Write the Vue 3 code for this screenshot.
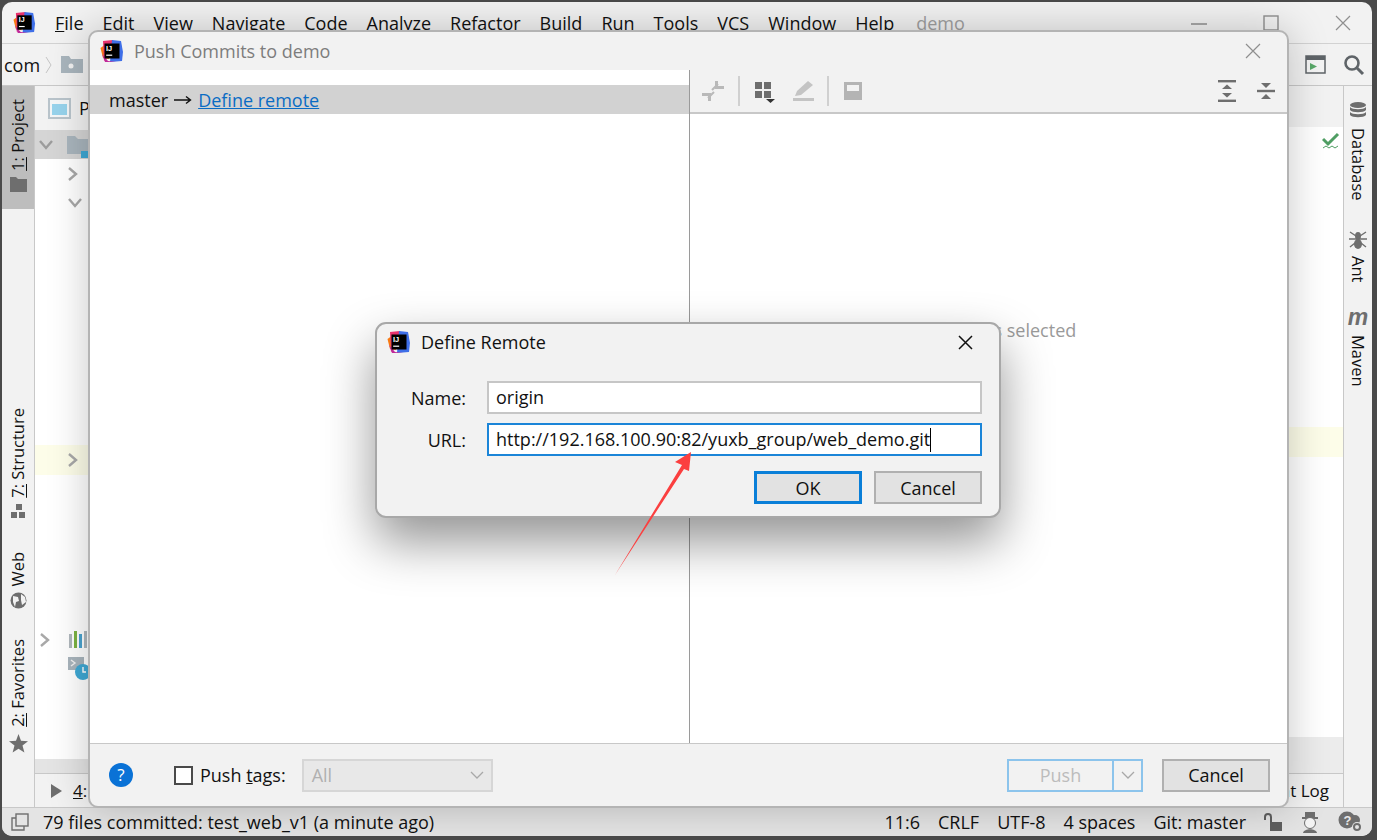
<script setup>
const menus = [
  { pre: '', key: 'F', post: 'ile' },
  { pre: '', key: 'E', post: 'dit' },
  { pre: '', key: 'V', post: 'iew' },
  { pre: '', key: 'N', post: 'avigate' },
  { pre: '', key: 'C', post: 'ode' },
  { pre: 'Anal', key: 'y', post: 'ze' },
  { pre: '', key: 'R', post: 'efactor' },
  { pre: '', key: 'B', post: 'uild' },
  { pre: 'R', key: 'u', post: 'n' },
  { pre: '', key: 'T', post: 'ools' },
  { pre: 'VC', key: 'S', post: '' },
  { pre: '', key: 'W', post: 'indow' },
  { pre: '', key: 'H', post: 'elp' },
]
</script>

<template>
  <div class="desktop">
    <svg class="defs" width="0" height="0">
      <symbol id="ij" viewBox="0 0 24 24">
        <polygon points="0.5,9 6,5 9,20 3,19" fill="#f97a12" />
        <polygon points="3,2 13,1 14,12 4,22" fill="#e8336e" />
        <polygon points="12,1 21,2 23,13 22,22 10,23" fill="#3f6fe8" />
        <polygon points="2,15 8,22 16,23 5,23" fill="#c02a9a" />
        <rect x="4.5" y="4.5" width="15" height="15" fill="#000" />
        <text x="6" y="11.6" font-size="7.4" font-weight="700" fill="#fff" font-family="Liberation Sans, sans-serif">IJ</text>
        <rect x="6.2" y="15.6" width="6" height="1.2" fill="#fff" />
      </symbol>
    </svg>

    <div class="ide">
      <div class="titlebar">
        <svg class="logo" width="23" height="23"><use href="#ij" /></svg>
        <div class="menu">
          <span v-for="m in menus" :key="m.pre + m.key">{{ m.pre }}<u>{{ m.key }}</u>{{ m.post }}</span>
        </div>
        <span class="proj-name">demo</span>
        <div class="win-controls">
          <svg width="16" height="16" viewBox="0 0 16 16"><path d="M0 9h16" stroke="#8f8f8f" stroke-width="1.4" /></svg>
          <svg width="16" height="16" viewBox="0 0 16 16"><rect x="1" y="1" width="14" height="14" fill="none" stroke="#8f8f8f" stroke-width="1.4" /></svg>
          <svg width="16" height="16" viewBox="0 0 16 16"><path d="M1 1l14 14M15 1L1 15" stroke="#8f8f8f" stroke-width="1.2" /></svg>
        </div>
      </div>

      <div class="navbar">
        <span class="crumb">com</span>
        <svg width="8" height="18" viewBox="0 0 8 18"><path d="M1 1l5 8-5 8" fill="none" stroke="#c4c4c4" /></svg>
        <svg class="nav-folder" width="22" height="17" viewBox="0 0 22 17">
          <path d="M0 0h8l2 3h12v14H0z" fill="#a9b5bd" />
          <circle cx="10" cy="10" r="2.5" fill="#f2f2f2" />
        </svg>
        <div class="nav-right">
          <svg width="21" height="19" viewBox="0 0 21 19">
            <rect x="1" y="1" width="19" height="17" fill="#f4f4f4" stroke="#5f6468" stroke-width="1.5" />
            <rect x="1" y="1" width="19" height="4" fill="#5f6468" />
            <polygon points="5,8 12,11.5 5,15" fill="#59a869" />
          </svg>
          <svg width="22" height="22" viewBox="0 0 22 22">
            <circle cx="9" cy="9" r="6.5" fill="none" stroke="#5f6468" stroke-width="2.6" />
            <path d="M14 14l6 6" stroke="#5f6468" stroke-width="3" />
          </svg>
        </div>
      </div>

      <div class="workspace">
        <div class="stripe stripe-left">
          <div class="stripe-btn active">
            <span class="vtext-up"><u>1:</u> Project</span>
            <svg width="17" height="15" viewBox="0 0 17 15"><path d="M0 0h6l2 2h9v13H0z" fill="#6e6e6e" /></svg>
          </div>
          <div class="stripe-btn btn-structure">
            <span class="vtext-up"><u>7:</u> Structure</span>
            <svg width="15" height="15" viewBox="0 0 15 15" fill="#6e6e6e">
              <rect x="5" y="0" width="6" height="6" />
              <rect x="0" y="8" width="6" height="6" />
              <rect x="8" y="8" width="6" height="6" />
            </svg>
          </div>
          <div class="stripe-btn btn-web">
            <span class="vtext-up">Web</span>
            <svg width="17" height="17" viewBox="0 0 17 17">
              <circle cx="8.5" cy="8.5" r="8" fill="#6e6e6e" />
              <path d="M3 4l5 1 1 4-3 1-1 5-2-5zM11 2l4 3 1 5-4 3-1-5z" fill="#f2f2f2" />
            </svg>
          </div>
          <div class="stripe-btn btn-fav">
            <span class="vtext-up"><u>2:</u> Favorites</span>
            <svg width="19" height="19" viewBox="0 0 19 19"><polygon points="9.5,0 12,6.8 19,7.2 13.5,11.6 15.4,18.6 9.5,14.7 3.6,18.6 5.5,11.6 0,7.2 7,6.8" fill="#6e6e6e" /></svg>
          </div>
        </div>

        <div class="center">
          <div class="panes">
            <div class="tree">
              <div class="tree-head">
                <svg width="23" height="21" viewBox="0 0 23 21">
                  <rect x="1" y="1" width="21" height="19" fill="#f4f6f7" stroke="#b9c4cb" stroke-width="2" />
                  <rect x="4" y="6" width="15" height="11" fill="#97d3ec" />
                </svg>
                <span>P</span>
              </div>
              <div class="tree-row selected">
                <svg class="chev" width="14" height="10" viewBox="0 0 14 10"><path d="M1 1l6 7 6-7" fill="none" stroke="#9c9c9c" stroke-width="2.4" /></svg>
                <svg class="tree-folder" width="24" height="22" viewBox="0 0 24 22">
                  <path d="M0 0h8l3 3h13v15H0z" fill="#a9b5bd" />
                  <rect x="14" y="15" width="10" height="7" fill="#3fa9d5" />
                </svg>
              </div>
              <div class="tree-row sub">
                <svg width="10" height="14" viewBox="0 0 10 14"><path d="M1 1l7 6-7 6" fill="none" stroke="#a8a8a8" stroke-width="2.4" /></svg>
              </div>
              <div class="tree-row sub">
                <svg width="14" height="10" viewBox="0 0 14 10"><path d="M1 1l6 7 6-7" fill="none" stroke="#a8a8a8" stroke-width="2.4" /></svg>
              </div>
              <div class="tree-row sub highlighted">
                <svg width="10" height="14" viewBox="0 0 10 14"><path d="M1 1l7 6-7 6" fill="none" stroke="#a8a8a8" stroke-width="2.4" /></svg>
              </div>
              <div class="tree-row libs">
                <svg width="10" height="14" viewBox="0 0 10 14"><path d="M1 1l7 6-7 6" fill="none" stroke="#a8a8a8" stroke-width="2.4" /></svg>
                <svg class="libs-icon" width="20" height="17" viewBox="0 0 20 17">
                  <rect x="0" y="3" width="3" height="14" fill="#b0b8bd" />
                  <rect x="5" y="0" width="3" height="17" fill="#7cb342" />
                  <rect x="10" y="3" width="3" height="14" fill="#4aa3cf" />
                  <rect x="15" y="0" width="3" height="17" fill="#b0b8bd" />
                </svg>
              </div>
              <div class="tree-row scratches">
                <svg width="20" height="24" viewBox="0 0 20 24">
                  <rect x="0" y="0" width="16" height="13" fill="#a9b5bd" />
                  <path d="M3 3l4 3-4 3" fill="none" stroke="#f2f2f2" stroke-width="1.4" />
                  <circle cx="15" cy="15" r="8" fill="#3fa9d5" />
                  <path d="M15 10v5h3" fill="none" stroke="#fff" stroke-width="1.4" />
                </svg>
              </div>
              <div class="tree-scroll"></div>
            </div>
            <div class="editor"></div>
            <div class="side-panel">
              <div class="side-head"></div>
              <div class="side-body">
                <svg class="inspect" width="18" height="18" viewBox="0 0 18 18">
                  <path d="M1 7l5 5 10-10" fill="none" stroke="#4f9e63" stroke-width="3" />
                  <path d="M1 16l3-2 3 2 3-2 3 2 3-2" fill="none" stroke="#4f9e63" stroke-width="1" />
                </svg>
                <div class="side-caret"></div>
              </div>
              <div class="side-scroll"></div>
            </div>
          </div>
          <div class="toolbar-bottom">
            <svg width="11" height="14" viewBox="0 0 11 14"><polygon points="0,0 11,7 0,14" fill="#6e6e6e" /></svg>
            <span class="tool-run"><u>4</u>:</span>
            <span class="tool-log">Event Log</span>
          </div>
        </div>

        <div class="stripe stripe-right">
          <div class="stripe-btn btn-db">
            <svg width="18" height="18" viewBox="0 0 18 18" fill="#6e6e6e">
              <ellipse cx="9" cy="3" rx="8" ry="3" />
              <path d="M1 5c2 3 14 3 16 0v3c-2 3-14 3-16 0zM1 10c2 3 14 3 16 0v3c-2 3-14 3-16 0z" />
            </svg>
            <span class="vtext-down">Database</span>
          </div>
          <div class="stripe-btn btn-ant">
            <svg width="18" height="20" viewBox="0 0 18 20">
              <ellipse cx="9" cy="6" rx="3" ry="4" fill="#6e6e6e" />
              <ellipse cx="9" cy="14" rx="4" ry="5" fill="#6e6e6e" />
              <path d="M1 2l6 4M17 2l-6 4M0 9h18M1 17l5-4M17 17l-5-4" stroke="#6e6e6e" stroke-width="1.4" />
            </svg>
            <span class="vtext-down">Ant</span>
          </div>
          <div class="stripe-btn btn-mvn">
            <span class="mvn-glyph">m</span>
            <span class="vtext-down">Maven</span>
          </div>
        </div>
      </div>

      <div class="statusbar">
        <svg width="18" height="18" viewBox="0 0 18 18" fill="none" stroke="#6e6e6e" stroke-width="1.4">
          <rect x="5" y="1" width="12" height="12" />
          <path d="M5 5H1v12h12v-4" />
        </svg>
        <span class="status-msg">79 files committed: test_web_v1 (a minute ago)</span>
        <div class="status-right">
          <span>11:6</span>
          <span>CRLF</span>
          <span>UTF-8</span>
          <span>4 spaces</span>
          <span>Git: master</span>
          <svg width="18" height="18" viewBox="0 0 18 18">
            <path d="M1 7V4a3 3 0 0 1 6 0v5" fill="none" stroke="#5f5f5f" stroke-width="2" />
            <rect x="6" y="9" width="12" height="9" fill="#5f5f5f" />
          </svg>
          <svg width="20" height="21" viewBox="0 0 20 21">
            <rect x="5" y="0" width="10" height="6" fill="#6e6e6e" />
            <rect x="2" y="5" width="16" height="2" fill="#6e6e6e" />
            <circle cx="10" cy="11" r="5.5" fill="#f4f4f4" stroke="#6e6e6e" />
            <path d="M3 21c1-5 13-5 14 0z" fill="#6e6e6e" />
          </svg>
          <svg width="25" height="22" viewBox="0 0 25 22">
            <circle cx="9" cy="9" r="8.5" fill="#6e6e6e" />
            <circle cx="17" cy="9" r="5" fill="#6e6e6e" />
            <text x="5.5" y="14" font-size="13" font-weight="700" fill="#e8e8e8" font-family="Liberation Sans, sans-serif">?</text>
            <circle cx="19" cy="16" r="5" fill="#e4e4e4" />
            <circle cx="19" cy="16" r="3" fill="none" stroke="#6e6e6e" stroke-width="2" />
          </svg>
        </div>
      </div>
    </div>

    <div class="push-dialog">
      <div class="dlg-title">
        <svg width="24" height="24"><use href="#ij" /></svg>
        <span>Push Commits to demo</span>
        <svg class="dlg-close" width="16" height="16" viewBox="0 0 16 16"><path d="M1 1l14 14M15 1L1 15" stroke="#8f8f8f" stroke-width="1.2" /></svg>
      </div>
      <div class="dlg-body">
        <div class="commits">
          <div class="branch-row">
            <span>master</span>
            <svg width="18" height="10" viewBox="0 0 18 10"><path d="M0 5h16M12 1.5L16.5 5 12 8.5" fill="none" stroke="#111" stroke-width="1.4" /></svg>
            <a class="link">Define remote</a>
          </div>
        </div>
        <div class="details">
          <div class="details-bar">
            <svg width="22" height="20" viewBox="0 0 22 20" fill="#b9b9b9">
              <polygon points="13,0 13,8 22,8 22,5 16,5 16,0" transform="rotate(0 0 0)" />
              <polygon points="9,20 9,12 0,12 0,15 6,15 6,20" />
              <path d="M10 9L16 3M12 11L6 17" stroke="#b9b9b9" stroke-width="2" />
            </svg>
            <i class="bar-sep"></i>
            <svg class="ic-grid" width="22" height="22" viewBox="0 0 22 22" fill="#6e6e6e">
              <rect x="0" y="0" width="7" height="7" />
              <rect x="9" y="0" width="7" height="7" />
              <rect x="0" y="9" width="7" height="7" />
              <rect x="9" y="9" width="7" height="7" />
              <polygon points="11,17 20,17 15.5,21" fill="#333" />
            </svg>
            <svg class="ic-pen" width="21" height="20" viewBox="0 0 21 20" fill="#c4c4c4">
              <polygon points="15,0 20,4 8,14 2,15 4,10" />
              <rect x="0" y="17" width="21" height="3" />
            </svg>
            <i class="bar-sep sep-b"></i>
            <svg width="18" height="18" viewBox="0 0 18 18">
              <rect width="18" height="18" fill="#b4b4b4" />
              <rect x="3" y="3" width="12" height="6" fill="#f2f2f2" />
            </svg>
            <div class="bar-right">
              <svg width="18" height="22" viewBox="0 0 18 22" fill="#6e6e6e">
                <rect width="18" height="2.4" />
                <rect y="19.6" width="18" height="2.4" />
                <polygon points="9,4.5 14,9 4,9" />
                <polygon points="9,17.5 14,13 4,13" />
              </svg>
              <svg width="18" height="18" viewBox="0 0 18 18" fill="#6e6e6e">
                <rect y="7.8" width="18" height="2.4" />
                <polygon points="9,6 14,1 4,1" />
                <polygon points="9,12 14,17 4,17" />
              </svg>
            </div>
          </div>
          <div class="empty-msg">No commits selected</div>
        </div>
      </div>
      <div class="dlg-footer">
        <span class="help">?</span>
        <span class="check"></span>
        <span class="check-label">Push <u>t</u>ags:</span>
        <div class="combo">
          <span>All</span>
          <svg width="14" height="8" viewBox="0 0 14 8"><path d="M1 1l6 6 6-6" fill="none" stroke="#a8a8a8" stroke-width="1.3" /></svg>
        </div>
        <div class="footer-right">
          <div class="split-btn">
            <span class="split-main">Push</span>
            <span class="split-arrow">
              <svg width="14" height="8" viewBox="0 0 14 8"><path d="M1 1l6 6 6-6" fill="none" stroke="#a8a8a8" stroke-width="1.3" /></svg>
            </span>
          </div>
          <button class="btn">Cancel</button>
        </div>
      </div>
    </div>

    <div class="remote-dialog">
      <div class="remote-title">
        <svg width="24" height="24"><use href="#ij" /></svg>
        <span>Define Remote</span>
        <svg class="remote-close" width="15" height="15" viewBox="0 0 15 15"><path d="M1 1l13 13M14 1L1 14" stroke="#111" stroke-width="1.5" /></svg>
      </div>
      <div class="remote-form">
        <label>Name:</label>
        <div class="field">origin</div>
        <label>URL:</label>
        <div class="field focused">http://192.168.100.90:82/yuxb_group/web_demo.git<i class="caret"></i></div>
      </div>
      <div class="remote-actions">
        <button class="btn primary">OK</button>
        <button class="btn">Cancel</button>
      </div>
    </div>

    <svg class="annot" width="1377" height="840" viewBox="0 0 1377 840">
      <polygon points="691,452 675,462 682,465 615,575 684,469 689,471" fill="#fb3f3f" />
    </svg>
  </div>
</template>

<style>
html, body {
  margin: 0;
  overflow: hidden;
}
</style>

<style scoped>
.desktop {
  position: relative;
  width: 1377px;
  height: 840px;
  overflow: hidden;
  background: #4a4a4a;
  font-family: "Open Sans", "Noto Sans", sans-serif;
  font-size: 18px;
  color: #111;
}
.defs {
  position: absolute;
}
.ide {
  position: absolute;
  left: 2px;
  top: 2px;
  width: 1370px;
  height: 834px;
  display: flex;
  flex-direction: column;
  background: #f2f2f2;
  border-radius: 10px;
  overflow: hidden;
}
.titlebar {
  height: 41px;
  flex: none;
  display: flex;
  align-items: center;
  padding-left: 11px;
  border-bottom: 1px solid #d2d2d2;
}
.logo {
  margin-right: 19px;
}
.menu {
  display: flex;
  gap: 19px;
}
.proj-name {
  margin-left: 22px;
  color: #a0a0a0;
}
.win-controls {
  margin-left: auto;
  display: flex;
  gap: 56px;
  margin-right: 21px;
}
.navbar {
  height: 41px;
  flex: none;
  display: flex;
  align-items: center;
  padding-left: 2px;
  border-bottom: 1px solid #c8c8c8;
}
.crumb {
  margin-right: 5px;
}
.nav-folder {
  margin-left: 8px;
}
.nav-right {
  margin-left: auto;
  margin-right: 7px;
  display: flex;
  align-items: center;
  gap: 17px;
}
.workspace {
  flex: 1;
  min-height: 0;
  display: flex;
}
.stripe {
  flex: none;
  display: flex;
  flex-direction: column;
  align-items: stretch;
  background: #f2f2f2;
}
.stripe-left {
  width: 32px;
  border-right: 1px solid #c8c8c8;
}
.stripe-right {
  width: 28px;
  border-left: 1px solid #c8c8c8;
}
.stripe-btn {
  display: flex;
  flex-direction: column;
  align-items: center;
  font-size: 16.5px;
}
.stripe-btn.active {
  background: #bdbdbd;
  padding: 13px 0 17px;
  gap: 6px;
}
.btn-structure {
  margin-top: 199px;
  gap: 6px;
}
.btn-web {
  margin-top: 33px;
  gap: 6px;
}
.btn-fav {
  margin-top: 30px;
  gap: 7px;
}
.btn-db {
  margin-top: 16px;
  gap: 8px;
}
.btn-ant {
  margin-top: 29px;
  gap: 6px;
}
.btn-mvn {
  margin-top: 27px;
  gap: 10px;
}
.vtext-up {
  writing-mode: vertical-rl;
  transform: rotate(180deg);
  line-height: 18px;
}
.vtext-down {
  writing-mode: vertical-rl;
  line-height: 18px;
}
.mvn-glyph {
  font-family: "Liberation Sans", sans-serif;
  font-size: 23px;
  font-weight: 700;
  font-style: italic;
  line-height: 16px;
  color: #6e6e6e;
}
.center {
  flex: 1;
  min-width: 0;
  display: flex;
  flex-direction: column;
}
.panes {
  flex: 1;
  min-height: 0;
  display: flex;
  background: #fff;
  border-bottom: 1px solid #c8c8c8;
}
.tree {
  width: 300px;
  flex: none;
  display: flex;
  flex-direction: column;
}
.tree-head {
  height: 44px;
  flex: none;
  display: flex;
  align-items: center;
  gap: 8px;
  padding-left: 13px;
  background: #f2f2f2;
}
.tree-row {
  height: 29px;
  flex: none;
  display: flex;
  align-items: center;
}
.tree-row.selected {
  background: #d5d5d5;
  padding-left: 4px;
}
.tree-folder {
  margin: 4px 0 0 14px;
}
.tree-row.sub {
  padding-left: 33px;
}
.highlighted {
  margin-top: 228px;
  background: #fdfde9;
  height: 30px;
}
.libs {
  margin-top: 150px;
  padding-left: 5px;
}
.libs-icon {
  margin-left: 19px;
}
.scratches {
  padding-left: 33px;
}
.tree-scroll {
  margin-top: auto;
  height: 14px;
  background: #e4e4e4;
}
.editor {
  flex: 1;
}
.side-panel {
  width: 55px;
  flex: none;
  display: flex;
  flex-direction: column;
  border-left: 1px solid #c8c8c8;
}
.side-head {
  height: 41px;
  flex: none;
  background: #f2f2f2;
}
.side-body {
  flex: 1;
  position: relative;
  padding-top: 5px;
  display: flex;
  flex-direction: column;
  align-items: flex-end;
}
.inspect {
  margin-right: 3px;
}
.side-caret {
  margin-top: 277px;
  width: 100%;
  height: 30px;
  background: #fdfde9;
}
.side-scroll {
  height: 36px;
  flex: none;
  background: #ececec;
}
.toolbar-bottom {
  height: 33px;
  flex: none;
  display: flex;
  align-items: center;
  padding-left: 16px;
  font-size: 17px;
}
.tool-run {
  margin-left: 11px;
}
.tool-log {
  margin-left: auto;
  margin-right: 14px;
}
.statusbar {
  height: 28px;
  flex: none;
  display: flex;
  align-items: center;
  padding-left: 9px;
  border-top: 1px solid #c8c8c8;
  background: #e4e4e4;
}
.status-msg {
  margin-left: 14px;
}
.status-right {
  margin-left: auto;
  margin-right: 9px;
  display: flex;
  align-items: center;
  gap: 18px;
}
.push-dialog {
  position: absolute;
  left: 88px;
  top: 30px;
  width: 1201px;
  height: 778px;
  box-sizing: border-box;
  display: flex;
  flex-direction: column;
  background: #f2f2f2;
  border: 2px solid #b4b4b4;
  border-radius: 10px;
  overflow: hidden;
  box-shadow: 0 0 40px rgba(0, 0, 0, 0.22);
}
.dlg-title {
  height: 38px;
  flex: none;
  display: flex;
  align-items: center;
  gap: 10px;
  padding-left: 10px;
  color: #7d7d7d;
}
.dlg-close {
  margin-left: auto;
  margin-right: 26px;
}
.dlg-body {
  flex: 1;
  min-height: 0;
  display: flex;
  background: #fff;
  border-bottom: 1px solid #c8c8c8;
}
.commits {
  width: 599px;
  flex: none;
  padding-top: 15px;
  border-right: 1px solid #9a9a9a;
}
.branch-row {
  height: 29px;
  display: flex;
  align-items: center;
  gap: 6px;
  padding-left: 19px;
  background: #d2d2d2;
}
.link {
  color: #0a6cc4;
  text-decoration: underline;
}
.details {
  flex: 1;
  min-width: 0;
  display: flex;
  flex-direction: column;
}
.details-bar {
  height: 42px;
  flex: none;
  display: flex;
  align-items: center;
  padding-left: 12px;
  background: #f2f2f2;
  border-bottom: 2px solid #c8c8c8;
}
.bar-sep {
  width: 2px;
  height: 30px;
  margin: 0 15px 0 14px;
  background: #d0d0d0;
}
.sep-b {
  margin: 0 15px 0 13px;
}
.ic-grid {
  margin: 3px 16px 0 0;
}
.bar-right {
  margin-left: auto;
  margin-right: 12px;
  display: flex;
  align-items: center;
  gap: 21px;
}
.empty-msg {
  margin-top: 204px;
  text-align: center;
  color: #9a9a9a;
}
.dlg-footer {
  height: 62px;
  flex: none;
  display: flex;
  align-items: center;
  padding: 0 17px 0 19px;
}
.help {
  width: 24px;
  height: 24px;
  border-radius: 50%;
  background: #0a72d6;
  color: #fff;
  text-align: center;
  line-height: 24px;
  font-size: 17px;
}
.check {
  width: 15px;
  height: 15px;
  margin-left: 41px;
  background: #fff;
  border: 2px solid #4a4a4a;
}
.check-label {
  margin-left: 7px;
}
.combo {
  width: 191px;
  height: 33px;
  box-sizing: border-box;
  margin-left: 16px;
  display: flex;
  align-items: center;
  justify-content: space-between;
  padding: 0 7px 0 8px;
  background: #e8e8e8;
  border: 2px solid #d6d6d6;
  color: #b0b0b0;
}
.footer-right {
  margin-left: auto;
  display: flex;
  gap: 19px;
}
.split-btn {
  width: 136px;
  height: 33px;
  box-sizing: border-box;
  display: flex;
  border: 2px solid #8cc4ec;
  color: #bcbcbc;
}
.split-main {
  flex: 1;
  text-align: center;
  line-height: 29px;
  border-right: 2px solid #8cc4ec;
}
.split-arrow {
  width: 27px;
  display: flex;
  align-items: center;
  justify-content: center;
}
.btn {
  width: 108px;
  height: 33px;
  box-sizing: border-box;
  padding: 0;
  background: #e2e2e2;
  border: 2px solid #b0b0b0;
  font: inherit;
  color: #111;
}
.btn.primary {
  border: 3px solid #0a7fd8;
}
.remote-dialog {
  position: absolute;
  left: 375px;
  top: 322px;
  width: 626px;
  height: 196px;
  box-sizing: border-box;
  display: flex;
  flex-direction: column;
  background: #f2f2f2;
  border: 2px solid #a8a8a8;
  border-radius: 11px;
  box-shadow: 0 24px 50px rgba(0, 0, 0, 0.42);
}
.remote-title {
  height: 36px;
  flex: none;
  display: flex;
  align-items: center;
  gap: 10px;
  padding-left: 10px;
}
.remote-close {
  margin-left: auto;
  margin-right: 26px;
}
.remote-form {
  display: grid;
  grid-template-columns: 89px 495px;
  column-gap: 21px;
  row-gap: 9px;
  margin-top: 21px;
  align-items: center;
}
.remote-form label {
  text-align: right;
}
.field {
  height: 33px;
  box-sizing: border-box;
  padding-left: 7px;
  line-height: 29px;
  background: #fff;
  border: 2px solid #c6c6c6;
}
.field.focused {
  border-color: #1b85d8;
}
.caret {
  display: inline-block;
  width: 1px;
  height: 24px;
  margin-left: 0;
  background: #000;
  vertical-align: -6px;
}
.remote-actions {
  display: flex;
  justify-content: flex-end;
  gap: 12px;
  margin-top: 15px;
  padding-right: 17px;
}
.annot {
  position: absolute;
  left: 0;
  top: 0;
  pointer-events: none;
}
</style>
